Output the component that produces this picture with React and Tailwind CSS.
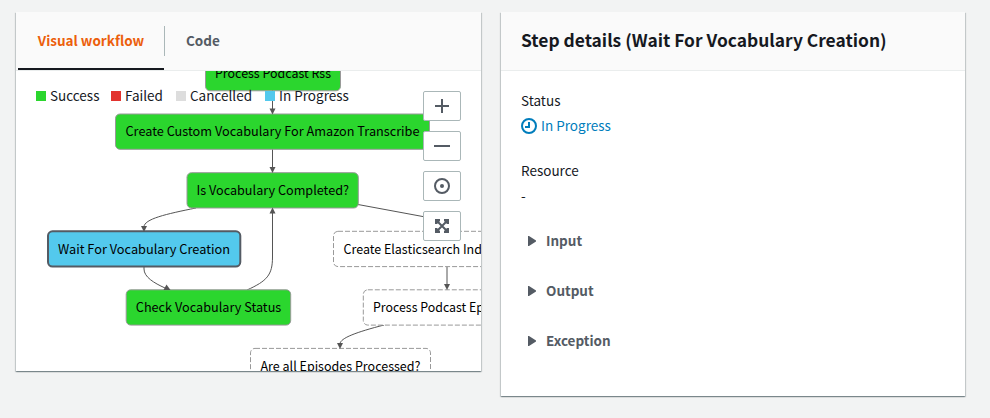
const LABEL_FONT = "font-['Noto_Sans_CJK_SC','Noto_Sans',sans-serif]";

const nodes = [
  { label: "Process Podcast Rss", x: 205.5, y: 55.5, w: 135, tx: 215, tw: 116, kind: "success" },
  { label: "Create Custom Vocabulary For Amazon Transcribe", x: 115.5, y: 114, w: 314, tx: 125.5, tw: 294, kind: "success" },
  { label: "Is Vocabulary Completed?", x: 187, y: 172.7, w: 171.3, tx: 196.5, tw: 152.5, kind: "success" },
  { label: "Wait For Vocabulary Creation", x: 48, y: 231.3, w: 192.3, tx: 58, tw: 172, kind: "progress" },
  { label: "Check Vocabulary Status", x: 126.2, y: 289.8, w: 164.5, tx: 135.8, tw: 145.5, kind: "success" },
  { label: "Create Elasticsearch Index", x: 333.5, y: 231.3, w: 227, tx: 343.5, tw: 151.5, kind: "idle" },
  { label: "Process Podcast Episodes", x: 363.3, y: 289.8, w: 168, tx: 373, tw: 148, kind: "idle" },
  { label: "Are all Episodes Processed?", x: 250.5, y: 348.4, w: 180, tx: 260.5, tw: 160, kind: "idle" },
];

const nodeClass = {
  success: "fill-[#2bd62e] stroke-[#999] stroke-1",
  progress: "fill-[#53c9ed] stroke-[#545b64] stroke-2",
  idle: "fill-white stroke-[#999] stroke-1 [stroke-dasharray:5_2]",
};

const edges = [
  "M272.5 90V109",
  "M272.5 149V168",
  "M196 208C166 214 144 219 144 227",
  "M144 267V269C144 277 154 283 165 288",
  "M247 290C267 281 272.5 275 272.5 257V212",
  "M358 204.5L447 221",
  "M447 267V285",
  "M384 325C357 332 340 338 340 344",
];

const heads = [
  "M269.5 108.5H275.5L272.5 114.5Z",
  "M269.5 167H275.5L272.5 173Z",
  "M141 226H147L144 232Z",
  "M166.5 284.6L170.5 290H163.5Z",
  "M269.5 213.5H275.5L272.5 207.5Z",
  "M444 284H450L447 290Z",
  "M337 343H343L340 349Z",
];

function Workflow() {
  return (
    <svg className="block h-[300px] w-[465px]" viewBox="16 71 465 300">
      {edges.map((d) => <path key={d} d={d} className="fill-none stroke-[#555]" />)}
      {nodes.map((n) => (
        <g key={n.label}>
          <rect x={n.x} y={n.y} width={n.w} height="35.3" rx="4.5" className={nodeClass[n.kind]} />
          <text x={n.tx} y={n.y + 22.2} textLength={n.tw} lengthAdjust="spacingAndGlyphs" className="fill-black text-[13px]">{n.label}</text>
        </g>
      ))}
      {heads.map((d) => <path key={d} d={d} className="fill-[#555]" />)}
    </svg>
  );
}

function Control({ children }) {
  return (
    <button className="flex h-[30px] w-[38px] items-center justify-center rounded-[2px] border border-[#aab7b8] bg-white">
      <svg className="size-4 fill-none stroke-[#545b64] stroke-2" viewBox="0 0 16 16">{children}</svg>
    </button>
  );
}

function Legend({ color, label, className }) {
  return (
    <div className={"flex items-center gap-1 " + className}>
      <span className={"size-2.5 " + color} />
      <span className="pb-0.5">{label}</span>
    </div>
  );
}

function Section({ label }) {
  return (
    <div className="flex h-[50px] items-center pl-[7px] font-bold text-[#545b64]">
      <svg className="mr-2.5 h-2.5 w-2 fill-[#545b64]" viewBox="0 0 8 10"><path d="M0 0H1L8 4.5V5.5L1 10H0Z" /></svg>
      <span className="pb-0.5">{label}</span>
    </div>
  );
}

const panel = "bg-white shadow-[0_1px_1px_0_rgba(0,28,36,0.3),1px_1px_1px_0_rgba(0,28,36,0.15),-1px_1px_1px_0_rgba(0,28,36,0.15)]";

export default function App() {
  return (
    <div className={"flex h-[418px] w-[990px] items-start gap-5 overflow-hidden bg-[#f2f3f3] pl-4 pt-3 text-[13.5px] leading-5 text-[#16191f] " + LABEL_FONT}>
      <section className={"h-[359px] w-[465px] shrink-0 " + panel}>
        <header className="flex h-[59px] border-b border-[#eaeded] bg-[#fafafa] pl-0.5">
          <div className="flex h-[58px] w-[146px] items-center justify-center border-b-2 border-[#16191f] font-bold text-[#ec5f0c]">Visual workflow</div>
          <div className="mt-3.5 h-[30px] w-px bg-[#aab7b8]" />
          <div className="flex h-[58px] items-center pb-0.5 pl-[21px] font-bold text-[#545b64]">Code</div>
        </header>
        <div className="relative h-[300px] overflow-hidden">
          <Workflow />
          <div className="absolute left-5 top-3.5 flex">
            <Legend color="bg-[#2bd62e]" label="Success" className="w-[75px]" />
            <Legend color="bg-[#e2332e]" label="Failed" className="w-[65px]" />
            <Legend color="bg-[#ddd]" label="Cancelled" className="w-[89px]" />
            <Legend color="bg-[#53c9ed]" label="In Progress" className="w-[90px]" />
          </div>
          <div className="absolute left-[407px] top-5 flex flex-col gap-2.5">
            <Control><path d="M1 8H15M8 1V15" /></Control>
            <Control><path d="M0 8H16" /></Control>
            <Control><circle cx="8" cy="8" r="7" /><circle cx="8" cy="8" r="2" className="fill-[#545b64] stroke-none" /></Control>
            <Control>
              <path d="M3 3L13 13M13 3L3 13" />
              <path d="M1 1H6V3L3 6H1ZM10 1H15V6H13L10 3ZM15 10V15H10V13L13 10ZM6 15H1V10H3L6 13Z" className="fill-[#545b64] stroke-none" />
            </Control>
          </div>
        </div>
      </section>
      <section className={"h-[384px] w-[464px] shrink-0 " + panel}>
        <header className="flex h-[59px] items-center border-b border-[#eaeded] bg-[#fafafa] pb-0.5 pl-5 text-[17.4px] font-bold">Step details (Wait For Vocabulary Creation)</header>
        <div className="px-5 pt-[19px]">
          <div>Status</div>
          <div className="mt-[5px] flex items-center gap-1 text-[#007dbc]">
            <svg className="mt-0.5 size-4 fill-none stroke-current stroke-2" viewBox="0 0 16 16"><circle cx="8" cy="8" r="7" /><path d="M8 4V9H4" /></svg>
            <span>In Progress</span>
          </div>
          <div className="mt-[25px]">Resource</div>
          <div className="mt-[5px]">-</div>
          <div className="mt-[11px]">
            <Section label="Input" />
            <Section label="Output" />
            <Section label="Exception" />
          </div>
        </div>
      </section>
    </div>
  );
}
